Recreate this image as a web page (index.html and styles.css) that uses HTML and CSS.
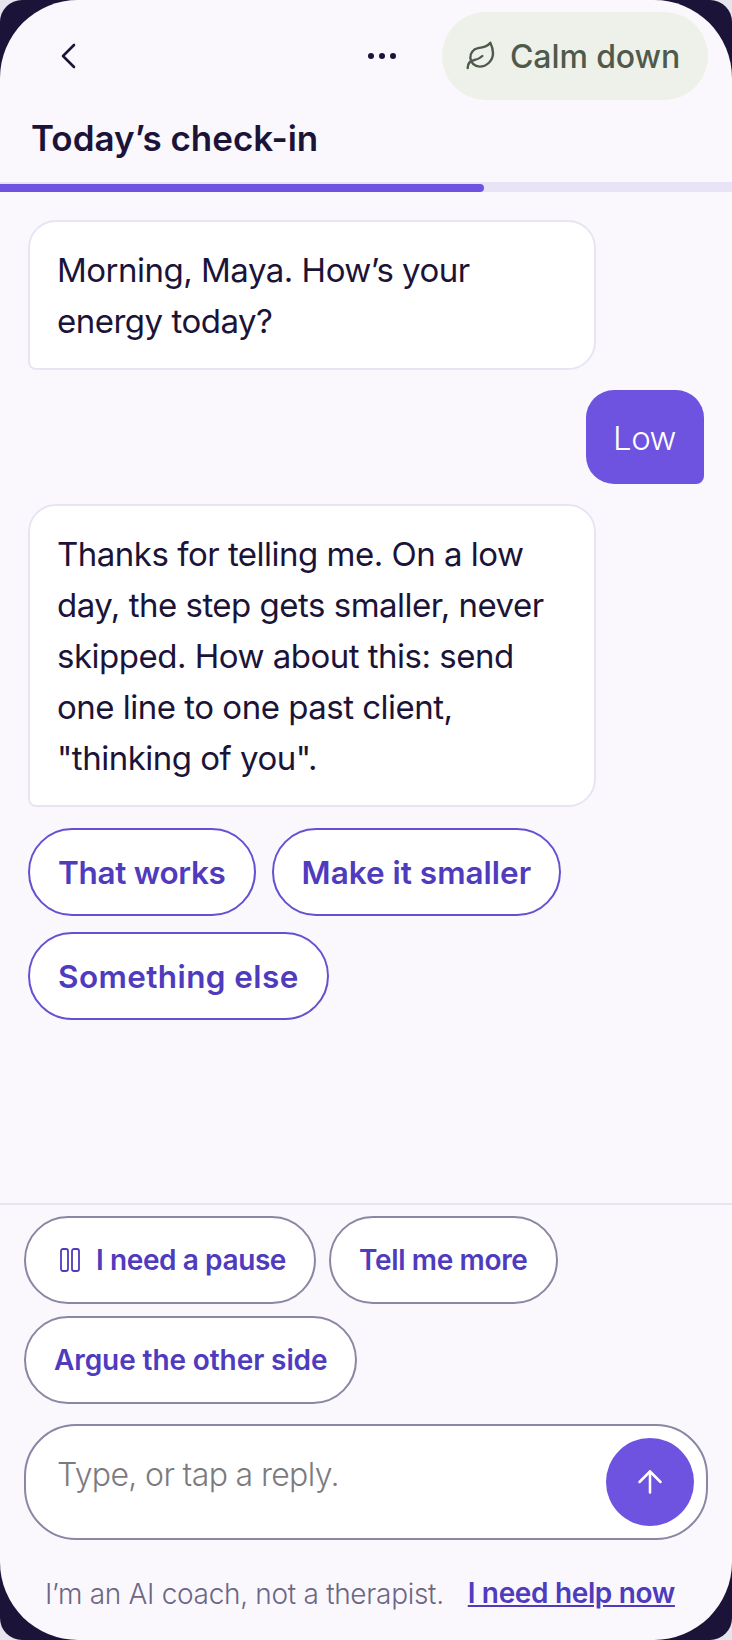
FILE: index.html
```html
<!DOCTYPE html>
<html lang="en">
<head>
    <meta charset="UTF-8">
    <meta name="viewport" content="width=device-width, initial-scale=1.0">
    <title>Today's check-in</title>
    <link rel="stylesheet" href="styles.css">
</head>
<body>
    <div class="device">
        <div class="screen">
            <header class="topbar">
                <button class="icon-btn back-btn" aria-label="Back">
                    <svg width="36" height="36" viewBox="0 0 36 36" fill="none" stroke="#1c1438" stroke-width="2.6" stroke-linecap="round" stroke-linejoin="round"><path d="M24 7 13 18l11 11"/></svg>
                </button>
                <button class="icon-btn more-btn" aria-label="More">
                    <svg width="32" height="8" viewBox="0 0 32 8" fill="#1c1438"><circle cx="5" cy="4" r="3"/><circle cx="16" cy="4" r="3"/><circle cx="27" cy="4" r="3"/></svg>
                </button>
                <button class="calm-btn">
                    <svg width="32" height="32" viewBox="0 0 24 24" fill="none" stroke="#4f5a4b" stroke-width="1.8" stroke-linecap="round" stroke-linejoin="round"><path d="M11 20A7 7 0 0 1 9.8 6.1C15.5 5 17 4.48 19 2c1 2 2 4.18 2 8 0 5.5-4.78 10-10 10Z"/><path d="M2 21c0-3 1.85-5.36 5.08-6C9.5 14.52 12 13 13 12"/></svg>
                    <span>Calm down</span>
                </button>
            </header>
            <h1 class="title">Today’s check-in</h1>
            <div class="progress"><div class="progress-fill" style="width: 484px"></div></div>

            <main class="chat">
                <div class="bubble coach">Morning, Maya. How’s your energy today?</div>
                <div class="bubble user">Low</div>
                <div class="bubble coach">Thanks for telling me. On a low day, the step gets smaller, never skipped. How about this: send one line to one past client, "thinking of you".</div>
                <div class="replies">
                    <button class="chip chip-short">That works</button>
                    <button class="chip">Make it smaller</button>
                    <button class="chip chip-wide">Something else</button>
                </div>
            </main>

            <footer class="composer">
                <div class="actions">
                    <button class="chip small pause-chip">
                        <svg width="20" height="24" viewBox="0 0 20 24" fill="none" stroke="#4f3bbd" stroke-width="1.8"><rect x="1" y="1" width="7" height="22" rx="2"/><rect x="12" y="1" width="7" height="22" rx="2"/></svg>
                        <span>I need a pause</span>
                    </button>
                    <button class="chip small tell-chip">Tell me more</button>
                    <button class="chip small">Argue the other side</button>
                </div>
                <div class="input-box">
                    <span class="placeholder">Type, or tap a reply.</span>
                    <button class="send-btn" aria-label="Send">
                        <svg width="36" height="36" viewBox="0 0 24 24" fill="none" stroke="#fff" stroke-width="1.7" stroke-linecap="round" stroke-linejoin="round"><path d="m5 12 7-7 7 7"/><path d="M12 19V5"/></svg>
                    </button>
                </div>
                <div class="disclaimer">
                    <span>I’m an AI coach, not a therapist.</span>
                    <a href="#" class="help-link">I need help now</a>
                </div>
            </footer>
        </div>
    </div>
</body>
</html>
```

FILE: styles.css
```css
* { box-sizing: border-box; }
html, body { margin: 0; height: 1640px; }
body { background: #e6e4ec; font-family: Inter, "Noto Sans", sans-serif; color: #1c1438; overflow: hidden; }
button { font-family: inherit; cursor: pointer; }

.device { width: 732px; height: 1640px; background: #1c1438; border-radius: 22px; }
.screen { width: 732px; height: 1640px; background: #faf8fd; border-radius: 78px; display: flex; flex-direction: column; overflow: hidden; }

.topbar { display: flex; align-items: center; padding: 12px 24px 0 50px; height: 100px; flex: none; }
.icon-btn { background: none; border: none; padding: 0; display: flex; align-items: center; justify-content: center; }
.back-btn { width: 36px; height: 36px; }
.more-btn { margin-left: auto; margin-right: 44px; }
.calm-btn { width: 266px; height: 88px; border: none; border-radius: 44px; background: #eef1e9; color: #4f5a4b; font-size: 32px; font-weight: 500; letter-spacing: -0.1px; display: flex; align-items: center; gap: 13px; padding: 0 0 0 23px; }

.title { margin: 18px 0 0 31px; font-size: 35px; line-height: 40px; font-weight: 600; letter-spacing: 0; height: 64px; flex: none; }

.progress { height: 10px; padding-top: 2px; background: #e8e3f5; flex: none; }
.progress-fill { height: 8px; background: #6d53e0; border-radius: 0 4px 4px 0; }

.chat { flex: 1; padding: 28px 28px 0; display: flex; flex-direction: column; }
.bubble { font-size: 33px; line-height: 51px; letter-spacing: -0.5px; font-weight: 400; }
.bubble.coach { width: 568px; background: #fff; border: 2px solid #e8e5f3; border-radius: 28px 28px 28px 8px; padding: 23px 26px 21px 27px; margin-bottom: 20px; }
.bubble.user { align-self: flex-end; background: #6d53e0; color: #fff; border-radius: 28px 28px 8px 28px; padding: 23px 28px 23px 27px; margin-bottom: 20px; height: 94px; font-weight: 300; }

.replies { display: flex; flex-wrap: wrap; gap: 16px 16px; margin-top: 1px; }
.chip { height: 88px; padding: 0 28px; border: 2px solid #6650d2; border-radius: 44px; background: #fff; color: #4f3bbd; font-size: 31.5px; font-weight: 600; letter-spacing: 0; display: flex; align-items: center; }
.chip-short { letter-spacing: -0.3px; }
.chip-wide { letter-spacing: 0.4px; }

.composer { flex: none; border-top: 2px solid #e8e5f3; padding: 11px 24px 0; height: 437px; }
.actions { display: flex; flex-wrap: wrap; gap: 12px 13px; }
.chip.small { border-color: #8a86a3; font-size: 28px; letter-spacing: -0.1px; gap: 16px; }
.chip.pause-chip { padding-left: 34px; letter-spacing: -0.4px; }
.chip.tell-chip { letter-spacing: -0.35px; }
.input-box { position: relative; display: flex; align-items: center; justify-content: space-between; height: 116px; margin-top: 20px; border: 2px solid #8a86a3; border-radius: 52px; background: #fff; padding: 0 12px 0 31px; }
.placeholder { font-size: 32px; color: #7b7b7f; letter-spacing: -0.65px; font-weight: 300; margin-top: -16px; }
.send-btn { width: 88px; height: 88px; border: none; border-radius: 50%; background: #6d53e0; display: flex; align-items: center; justify-content: center; padding: 0; }
.disclaimer { display: flex; align-items: center; gap: 24px; padding: 37px 0 0 21px; font-size: 28px; color: #6b6785; font-weight: 300; letter-spacing: -0.3px; }
.help-link { color: #4f3bbd; font-weight: 600; letter-spacing: -0.35px; margin-top: -3px; }
```
